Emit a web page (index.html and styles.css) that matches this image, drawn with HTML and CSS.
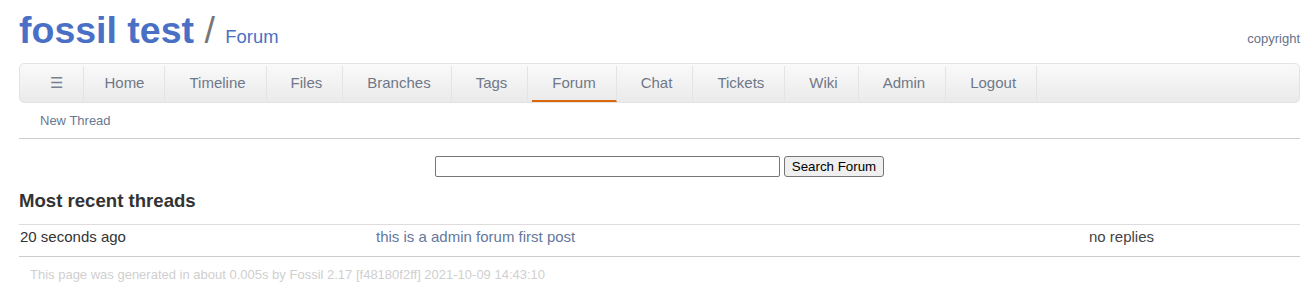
FILE: index.html
```html
<!DOCTYPE html>
<html lang="en">
<head>
    <meta charset="UTF-8">
    <title>fossil test: Forum</title>
    <link rel="stylesheet" href="styles.css">
</head>
<body>
    <div class="header">
        <div class="title">
            <span class="project">fossil test</span>
            <span class="slash">/</span>
            <a class="page-name" href="#">Forum</a>
        </div>
        <a class="copyright" href="#">copyright</a>
    </div>
    <nav class="mainmenu">
        <a class="hbbtn" href="#">&#9776;</a><a href="#">Home</a>
        <a class="spaced" href="#">Timeline</a>
        <a class="spaced" href="#">Files</a>
        <a class="spaced" href="#">Branches</a>
        <a class="spaced" href="#">Tags</a>
        <a class="spaced active" href="#">Forum</a>
        <a class="spaced" href="#">Chat</a>
        <a class="spaced" href="#">Tickets</a>
        <a class="spaced" href="#">Wiki</a>
        <a class="spaced" href="#">Admin</a>
        <a class="spaced" href="#">Logout</a>
    </nav>
    <div class="submenu">
        <a href="#">New Thread</a>
    </div>
    <form class="search">
        <input type="text" class="search-box">
        <button type="button" class="search-btn">Search Forum</button>
    </form>
    <h1 class="section-title">Most recent threads</h1>
    <div class="threads">
        <div class="thread-row">
            <span class="when">20 seconds ago</span>
            <a class="subject" href="#">this is a admin forum first post</a>
            <span class="replies">no replies</span>
        </div>
    </div>
    <div class="footer">
        This page was generated in about 0.005s by Fossil 2.17 [f48180f2ff] 2021-10-09 14:43:10
    </div>
</body>
</html>
```

FILE: styles.css
```css
:root {
    --title-color: #4a70c6;
    --link-color: #64789c;
    --menu-color: #6f7888;
    --line-color: #cccccc;
    --active-color: #d9690f;
}
body {
    margin: 0;
    padding: 0 11px 0 19px;
    font-family: "Liberation Sans", Arial, sans-serif;
    font-size: 15px;
    color: #333;
    background: white;
}
a {
    text-decoration: none;
    color: var(--link-color);
}
.header {
    display: flex;
    justify-content: space-between;
    align-items: baseline;
    height: 54px;
    padding-top: 9px;
}
.title {
    font-size: 37.5px;
}
.project {
    font-weight: bold;
    color: var(--title-color);
}
.slash {
    color: #777;
}
.page-name {
    font-size: 18.4px;
    color: var(--title-color);
}
.copyright {
    font-size: 13px;
    color: #66728c;
}
.mainmenu {
    display: flex;
    padding-top: 2px;
    border: 1px solid #e3e3e3;
    border-radius: 5px;
    background: linear-gradient(#fafafa, #eaeaea);
    white-space: nowrap;
}
.mainmenu a {
    display: block;
    padding: 7px 20px 7px;
    line-height: 20px;
    color: var(--menu-color);
    border-right: 1px solid #e4e4e4;
    border-bottom: 2px solid transparent;
}
.mainmenu a.hbbtn {
    padding-left: 30px;
    font-family: "DejaVu Sans", sans-serif;
    font-size: 15px;
    color: #7a8090;
}
.mainmenu a.spaced {
    margin-left: 4px;
}
.mainmenu a.active {
    border-bottom-color: var(--active-color);
}
.submenu {
    padding: 10px 21px;
    font-size: 13px;
    border-bottom: 1px solid var(--line-color);
}
.submenu a {
    color: #6a7891;
}
.search {
    display: flex;
    justify-content: center;
    gap: 4px;
    margin: 17px 0 0;
}
.search-box {
    box-sizing: border-box;
    width: 345px;
    height: 21px;
    margin: 0;
    border: 1px solid #767676;
    border-radius: 2px;
}
.search-btn {
    height: 21px;
    margin: 0;
    padding: 1px 7px;
    font-family: "Liberation Sans", Arial, sans-serif;
    font-size: 13.33px;
    color: black;
    background: #efefef;
    border: 1px solid #767676;
    border-radius: 3px;
}
.section-title {
    margin: 13px 0 0;
    font-size: 18.6px;
    font-weight: bold;
    color: #333;
}
.threads {
    margin-top: 12px;
    border-top: 1px solid #dddddd;
    border-bottom: 1px solid var(--line-color);
}
.thread-row {
    display: grid;
    grid-template-columns: 357px 713px 1fr;
    padding: 3px 0 11px 0;
}
.when {
    padding-left: 1px;
}
.replies {
    color: #444;
}
.footer {
    padding: 10px 11px;
    font-size: 13px;
    color: #cfcfcf;
}
```
